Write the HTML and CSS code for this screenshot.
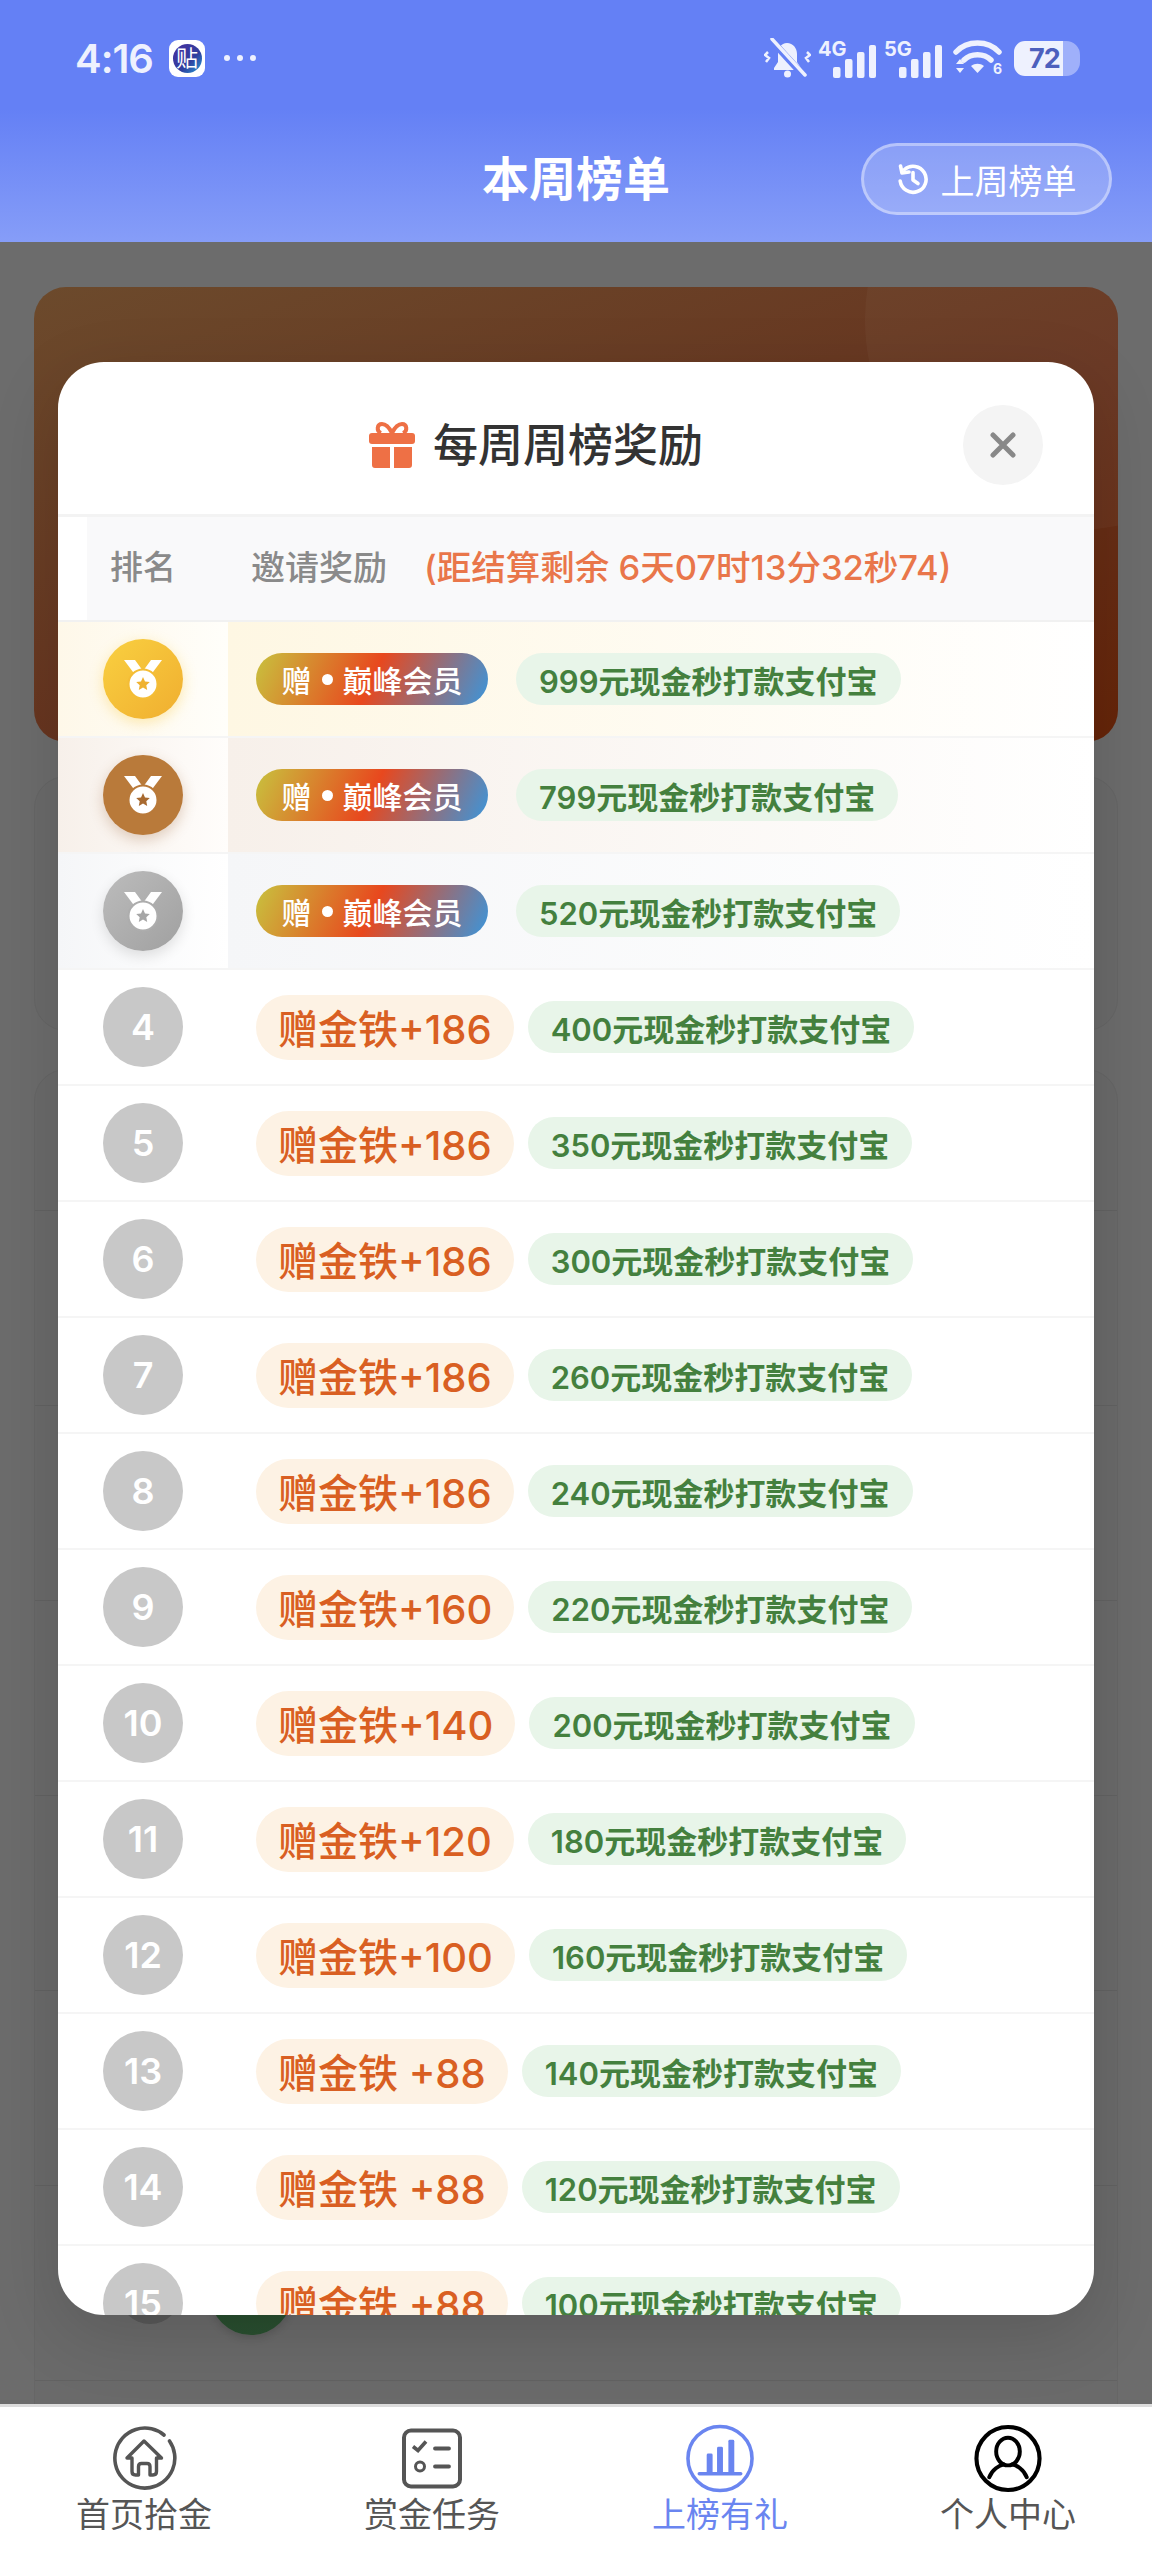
FILE: index.html
```html
<!DOCTYPE html>
<html lang="zh-CN">
<head>
<meta charset="utf-8">
<title>本周榜单</title>
<link rel="stylesheet" href="styles.css">
</head>
<body>
<div class="page">
  <header class="top">
    <div class="status">
      <div class="status-left">
        <span class="time">4:16</span>
        <span class="app-icon"><span class="app-inner">贴</span></span>
        <span class="dots"><i></i><i></i><i></i></span>
      </div>
      <div class="status-right">
        <svg class="ic-bell" width="47" height="40" viewBox="0 0 47 40"><path d="M23 5c-6 0-9 5-9 11v8l-4 6v2h27v-2l-4-6v-8c0-6-4-11-10-11z" fill="#eef1fe"/><circle cx="23.500" cy="36" r="3.500" fill="#eef1fe"/><path d="M7 2l33 36" stroke="#6480f5" stroke-width="7"/><path d="M8 1l33 36" stroke="#eef1fe" stroke-width="3.500" stroke-linecap="round"/><path d="M4 14l-3 3 4 3-3 4M43 14l3 3-4 3 3 4" stroke="#eef1fe" stroke-width="2.500" fill="none"/></svg>
        <svg class="ic-net" width="58" height="44" viewBox="0 0 58 44"><text class="net-label" x="0" y="20">4G</text><rect x="15" y="31" width="7.500" height="11" rx="2"/><rect x="27" y="23" width="7.500" height="19" rx="2"/><rect x="39" y="16" width="7.500" height="26" rx="2"/><rect x="51" y="9" width="7" height="33" rx="2"/></svg>
        <svg class="ic-net" width="58" height="44" viewBox="0 0 58 44"><text class="net-label" x="0" y="20">5G</text><rect x="15" y="31" width="7.500" height="11" rx="2"/><rect x="27" y="23" width="7.500" height="19" rx="2"/><rect x="39" y="16" width="7.500" height="26" rx="2"/><rect x="51" y="9" width="7" height="33" rx="2"/></svg>
        <svg class="ic-wifi" width="50" height="42" viewBox="0 0 50 42"><path d="M3 13C14 1 35 1 46 13M11 21c7-7 20-7 27 0" fill="none" stroke="#eef1fe" stroke-width="5.500" stroke-linecap="round"/><path d="M18 27c4-3 9-3 13 0l-6.500 7z" fill="#eef1fe"/><path d="M3 25l4-5 4 5zM3 29h8l-4 5z" fill="#eef1fe"/><text class="wifi-six" x="40" y="35">6</text></svg>
        <span class="battery"><span class="battery-num">72</span></span>
      </div>
    </div>
    <div class="nav">
      <span></span>
      <h1 class="nav-title">本周榜单</h1>
      <button class="history-btn">
        <svg width="32" height="32" viewBox="0 0 32 32"><path d="M7.500 6.500A13 13 0 1 1 3.200 18" fill="none" stroke="#fff" stroke-width="3.600" stroke-linecap="round"/><path d="M3.500 3l1.500 7 7-1" fill="none" stroke="#fff" stroke-width="3.600" stroke-linecap="round" stroke-linejoin="round"/><path d="M16 9.500V17l5 3.500" fill="none" stroke="#fff" stroke-width="3.600" stroke-linecap="round" stroke-linejoin="round"/></svg>
        <span>上周榜单</span>
      </button>
    </div>
  </header>

  <main class="backdrop">
    <section class="bg-hero"><span class="bg-hero-glow"></span></section>
    <section class="bg-card bg-card-short"></section>
    <section class="bg-card bg-list">
      <div class="bg-row bg-row-first"></div>
      <div class="bg-row"></div>
      <div class="bg-row"></div>
      <div class="bg-row"></div>
      <div class="bg-row"></div>
      <div class="bg-row"></div>
      <div class="bg-row bg-row-people"><span class="bg-rank"></span><span class="bg-avatar"></span></div>
      <div class="bg-row"></div>
    </section>
  </main>

  <nav class="tabs">
    <a class="tab">
      <svg width="66" height="66" viewBox="0 0 66 66"><path d="M58.500 15.500A30 30 0 1 1 53 9.500" fill="none" stroke="#555" stroke-width="3.600" stroke-linecap="round"/><path d="M16 32.500L33 15.500l17.500 17h-5V46q0 3.500-3.500 3.500h-3V41q0-3-3-3h-5.500q-3 0-3 3v8.500h-3q-3.500 0-3.500-3.500V32.500z" fill="none" stroke="#555" stroke-width="3.400" stroke-linejoin="round"/></svg>
      <span>首页拾金</span>
    </a>
    <a class="tab">
      <svg width="66" height="66" viewBox="0 0 66 66"><rect x="5" y="5" width="56" height="56" rx="7" fill="none" stroke="#555" stroke-width="4"/><path d="M14 21l5 4 8-9" fill="none" stroke="#555" stroke-width="3.600"/><path d="M36 23h14M36 41h14" stroke="#555" stroke-width="3.800" stroke-linecap="round"/><circle cx="21" cy="41" r="4.500" fill="none" stroke="#555" stroke-width="3"/></svg>
      <span>赏金任务</span>
    </a>
    <a class="tab tab-on">
      <svg width="70" height="70" viewBox="0 0 70 70"><circle cx="35" cy="35" r="32.500" fill="none" stroke="#6a85f0" stroke-width="3.600"/><path d="M14 50.500h42" stroke="#6a85f0" stroke-width="3.600" stroke-linecap="round"/><rect x="21.500" y="30" width="6" height="20" rx="1.500" fill="#6a85f0"/><rect x="32" y="23" width="6" height="27" rx="1.500" fill="#6a85f0"/><rect x="43.500" y="16" width="6" height="34" rx="1.500" fill="#6a85f0"/></svg>
      <span>上榜有礼</span>
    </a>
    <a class="tab">
      <svg width="70" height="70" viewBox="0 0 70 70"><circle cx="35" cy="35" r="32" fill="none" stroke="#000" stroke-width="4.200"/><ellipse cx="35" cy="28" rx="12" ry="14" fill="none" stroke="#000" stroke-width="4"/><path d="M16 54c3-8 10-12 15-13M54 54c-3-8-10-12-15-13" fill="none" stroke="#000" stroke-width="4" stroke-linecap="round"/></svg>
      <span>个人中心</span>
    </a>
  </nav>

  <div class="modal">
    <div class="modal-head">
      <svg width="46" height="46" viewBox="0 0 46 46"><path d="M12 11C7 9 8 2 13 2c4 0 8 5 10 9 2-4 6-9 10-9 5 0 6 7 1 9" fill="none" stroke="#ee7045" stroke-width="4"/><rect x="0" y="11" width="46" height="11" rx="3" fill="#ee7045"/><path d="M3 25h18v21H6q-3 0-3-3zM25 25h18v18q0 3-3 3H25z" fill="#ee7045"/></svg>
      <h2 class="modal-title">每周周榜奖励</h2>
      <button class="close"><svg width="26" height="26" viewBox="0 0 26 26"><path d="M3 3l20 20M23 3L3 23" stroke="#888" stroke-width="5" stroke-linecap="round"/></svg></button>
    </div>
    <div class="thead">
      <span class="th-rank">排名</span>
      <span class="th-reward">邀请奖励</span>
      <span class="th-count">(距结算剩余 6天07时13分32秒74)</span>
    </div>

    <div class="row row-gold">
      <div class="rank"><span class="medal medal-gold"><svg width="80" height="80" viewBox="0 0 80 80"><path d="M21 21h11l8 11-7 5zM59 21H48l-8 11 7 5z" fill="#fff"/><circle cx="40" cy="45" r="14.500" fill="#fff" stroke="#f4bd36" stroke-width="2"/><path d="M40 38l2 4.400 4.800.6-3.500 3.300.9 4.700-4.200-2.400-4.200 2.400.9-4.700-3.500-3.300 4.800-.6z" fill="#efb230"/></svg></span></div>
      <div class="reward"><span class="vip"><span>赠</span><i class="vip-dot"></i><span>巅峰会员</span></span><span class="cash">999元现金秒打款支付宝</span></div>
    </div>
    <div class="row row-bronze">
      <div class="rank"><span class="medal medal-bronze"><svg width="80" height="80" viewBox="0 0 80 80"><path d="M21 21h11l8 11-7 5zM59 21H48l-8 11 7 5z" fill="#fff"/><circle cx="40" cy="45" r="14.500" fill="#fff" stroke="#b97a3a" stroke-width="2"/><path d="M40 38l2 4.400 4.800.6-3.500 3.300.9 4.700-4.200-2.400-4.200 2.400.9-4.700-3.500-3.300 4.800-.6z" fill="#a86a30"/></svg></span></div>
      <div class="reward"><span class="vip"><span>赠</span><i class="vip-dot"></i><span>巅峰会员</span></span><span class="cash">799元现金秒打款支付宝</span></div>
    </div>
    <div class="row row-silver">
      <div class="rank"><span class="medal medal-silver"><svg width="80" height="80" viewBox="0 0 80 80"><path d="M21 21h11l8 11-7 5zM59 21H48l-8 11 7 5z" fill="#fff"/><circle cx="40" cy="45" r="14.500" fill="#fff" stroke="#adadad" stroke-width="2"/><path d="M40 38l2 4.400 4.800.6-3.500 3.300.9 4.700-4.200-2.400-4.200 2.400.9-4.700-3.500-3.300 4.800-.6z" fill="#a6a6a6"/></svg></span></div>
      <div class="reward"><span class="vip"><span>赠</span><i class="vip-dot"></i><span>巅峰会员</span></span><span class="cash">520元现金秒打款支付宝</span></div>
    </div>
    <div class="row"><div class="rank"><span class="num">4</span></div><div class="reward"><span class="gift">赠金铁+186</span><span class="cash">400元现金秒打款支付宝</span></div></div>
    <div class="row"><div class="rank"><span class="num">5</span></div><div class="reward"><span class="gift">赠金铁+186</span><span class="cash">350元现金秒打款支付宝</span></div></div>
    <div class="row"><div class="rank"><span class="num">6</span></div><div class="reward"><span class="gift">赠金铁+186</span><span class="cash">300元现金秒打款支付宝</span></div></div>
    <div class="row"><div class="rank"><span class="num">7</span></div><div class="reward"><span class="gift">赠金铁+186</span><span class="cash">260元现金秒打款支付宝</span></div></div>
    <div class="row"><div class="rank"><span class="num">8</span></div><div class="reward"><span class="gift">赠金铁+186</span><span class="cash">240元现金秒打款支付宝</span></div></div>
    <div class="row"><div class="rank"><span class="num">9</span></div><div class="reward"><span class="gift">赠金铁+160</span><span class="cash">220元现金秒打款支付宝</span></div></div>
    <div class="row"><div class="rank"><span class="num">10</span></div><div class="reward"><span class="gift">赠金铁+140</span><span class="cash">200元现金秒打款支付宝</span></div></div>
    <div class="row"><div class="rank"><span class="num">11</span></div><div class="reward"><span class="gift">赠金铁+120</span><span class="cash">180元现金秒打款支付宝</span></div></div>
    <div class="row"><div class="rank"><span class="num">12</span></div><div class="reward"><span class="gift">赠金铁+100</span><span class="cash">160元现金秒打款支付宝</span></div></div>
    <div class="row"><div class="rank"><span class="num">13</span></div><div class="reward"><span class="gift">赠金铁 +88</span><span class="cash">140元现金秒打款支付宝</span></div></div>
    <div class="row"><div class="rank"><span class="num">14</span></div><div class="reward"><span class="gift">赠金铁 +88</span><span class="cash">120元现金秒打款支付宝</span></div></div>
    <div class="row"><div class="rank"><span class="num">15</span></div><div class="reward"><span class="gift">赠金铁 +88</span><span class="cash">100元现金秒打款支付宝</span></div></div>
  </div>
</div>
</body>
</html>
```
FILE: styles.css
```css
* { box-sizing: border-box; }
html, body { margin: 0; padding: 0; }
body {
  font-family: Inter, "Noto Sans CJK SC", sans-serif;
  background: #fff;
}
h1, h2 { margin: 0; font-weight: 500; }
button { border: 0; padding: 0; font: inherit; }

.page {
  position: relative;
  width: 1152px;
  height: 2560px;
  display: flex;
  flex-direction: column;
  overflow: hidden;
}

/* header */
.top {
  position: relative;
  z-index: 2;
  height: 242px;
  flex: none;
  background: linear-gradient(180deg, #6480f5 0, #6480f5 45%, #869df8 100%);
  color: #fff;
}
.status {
  height: 116px;
  padding: 0 72px 0 75px;
  display: flex;
  align-items: center;
  justify-content: space-between;
}
.status-left { display: flex; align-items: center; }
.time { font-size: 40px; font-weight: 600; color: #eef1fe; width: 94px; letter-spacing: -1px; }
.app-icon {
  width: 36px; height: 37px;
  background: #fff;
  border-radius: 9px;
  display: flex; align-items: center; justify-content: center;
}
.app-inner {
  width: 29px; height: 29px;
  border-radius: 50%;
  background: linear-gradient(135deg, #4a2fa0, #2e3f9e 60%, #26a0d8);
  color: #fff;
  font-size: 22px;
  line-height: 29px;
  text-align: center;
}
.dots { display: flex; gap: 7px; margin-left: 19px; }
.dots i { width: 6px; height: 6px; border-radius: 50%; background: #eef1fe; }
.status-right { display: flex; align-items: center; gap: 7px; }
.ic-net rect { fill: #eef1fe; }
.net-label { font-size: 20px; font-weight: 700; fill: #eef1fe; }
.wifi-six { font-size: 14px; font-weight: 700; fill: #eef1fe; }
.ic-wifi { margin-left: 4px; margin-top: 4px; }
.ic-net + .ic-net { margin-left: 1px; }
.battery {
  width: 66px; height: 35px;
  margin-left: 4px;
  border-radius: 11px 14px 14px 11px;
  background: linear-gradient(90deg, #eef1fe 0, #eef1fe 74%, #9fb0fa 74%);
  display: flex; align-items: center;
  padding-left: 15px;
}
.battery-num { font-size: 27px; font-weight: 700; color: #4d60bd; line-height: 1; letter-spacing: -1px; }

.nav {
  height: 126px;
  display: grid;
  grid-template-columns: 1fr auto 1fr;
  align-items: center;
  padding: 0 40px;
}
.nav-title { font-size: 47px; line-height: 1; color: #fff; font-weight: 700; margin-top: -2px; }
.history-btn {
  justify-self: end;
  width: 251px; height: 72px;
  border-radius: 36px;
  background: rgba(255,255,255,.2);
  border: 3px solid rgba(255,255,255,.38);
  color: #fff;
  display: flex; align-items: center; justify-content: center; gap: 12px;
  font-size: 34px;
  font-family: inherit;
}

/* dimmed page behind the modal */
.backdrop {
  flex: 1;
  min-height: 0;
  overflow: hidden;
  background: #6c6c6c;
  padding: 45px 34px 0;
  display: flex;
  flex-direction: column;
}
.bg-hero {
  position: relative;
  flex: none;
  height: 455px;
  border-radius: 32px;
  overflow: hidden;
  background: linear-gradient(160deg, #6c4a2c 0, #67341f 55%, #652408 100%);
}
.bg-hero-glow {
  position: absolute;
  left: 831px; top: -177px;
  width: 420px; height: 420px;
  border-radius: 50%;
  background: rgba(255,255,255,.03);
}
.bg-card {
  flex: none;
  border-radius: 32px;
  background: #6a6a6a;
  border: 1px solid #666;
}
.bg-card-short { height: 255px; margin-top: 34px; }
.bg-list { margin-top: 38px; }
.bg-row { height: 195px; border-bottom: 1px solid #626262; display: flex; align-items: center; }
.bg-row-first { height: 141px; }
.bg-row-people { padding: 20px 0 0 84px; gap: 29px; }
.bg-rank { width: 62px; height: 62px; border-radius: 50%; background: #585858; }
.bg-avatar {
  width: 82px; height: 82px;
  border-radius: 50%;
  background: linear-gradient(180deg, #3a2a22 0, #274d2e 70%, #2a4f30 100%);
  margin-top: 2px;
  box-shadow: 0 3px 8px rgba(0,0,0,.15);
}

/* tab bar */
.tabs {
  position: relative;
  z-index: 2;
  flex: none;
  height: 156px;
  background: #fff;
  border-top: 3px solid #dcdcdc;
  display: grid;
  grid-template-columns: repeat(4, 288px);
}
.tab {
  display: flex;
  flex-direction: column;
  align-items: center;
  font-size: 34px;
  line-height: 40px;
  color: #555;
  padding-top: 17px;
}
.tab svg { height: 69px; flex: none; }
.tab span { margin-top: 2px; }
.tab-on { color: #6a85f0; }

/* modal */
.modal {
  position: absolute;
  z-index: 1;
  left: 58px; top: 362px;
  width: 1036px; height: 1953px;
  border-radius: 46px;
  background: #fff;
  overflow: hidden;
  box-shadow: 0 20px 70px rgba(0,0,0,.14);
}
.modal-head {
  height: 152px;
  padding: 14px 51px 0 311px;
  display: flex;
  align-items: center;
}
.modal-title { font-size: 45px; color: #333; margin-left: 18px; line-height: 1; }
.close {
  margin-left: auto;
  width: 80px; height: 80px;
  border-radius: 50%;
  background: #f4f4f4;
  display: flex; align-items: center; justify-content: center;
}
.thead {
  height: 108px;
  border-top: 3px solid #f3f3f3;
  border-bottom: 2px solid #f1f1f1;
  background: linear-gradient(90deg, #fff 0, #fff 29px, #f9f9fa 29px);
  display: flex;
  align-items: center;
  font-size: 33px;
  font-weight: 500;
  color: #8a8a8a;
  padding: 0 0 7px 52px;
}
.th-reward { margin-left: 75px; font-size: 34px; }
.th-count { margin-left: 37px; color: #e9764a; font-size: 34.500px; }

.row {
  height: 116px;
  border-bottom: 2px solid #f5f5f5;
  display: grid;
  grid-template-columns: 170px 1fr;
}
.rank { display: flex; align-items: center; justify-content: center; }
.reward { display: flex; align-items: center; gap: 14px; padding-left: 28px; }
.row-gold .rank { background: linear-gradient(90deg, #fef8e9, #fffefa); }
.row-gold .reward { background: linear-gradient(90deg, #fef7e3, #ffffff); }
.row-bronze .rank { background: linear-gradient(90deg, #f7f0ea, #fffdfb); }
.row-bronze .reward { background: linear-gradient(90deg, #f7f0ea, #ffffff); }
.row-silver .rank { background: linear-gradient(90deg, #f5f6f8, #ffffff); }
.row-silver .reward { background: linear-gradient(90deg, #f5f6f8, #ffffff); }

.medal, .num {
  width: 80px; height: 80px;
  border-radius: 50%;
  display: flex; align-items: center; justify-content: center;
}
.medal-gold { background: linear-gradient(135deg, #f9d040, #f0ae30); box-shadow: 0 4px 14px rgba(250,205,70,.4); }
.medal-bronze { background: #b97a3a; box-shadow: 0 5px 14px rgba(150,90,40,.28); }
.medal-silver { background: linear-gradient(135deg, #bcbcbc, #a0a0a0); box-shadow: 0 5px 14px rgba(0,0,0,.12); }
.num { background: #c8c8c8; color: #fff; font-size: 36px; font-weight: 600; }

.vip {
  width: 232px; height: 52px;
  margin-right: 14px;
  border-radius: 26px;
  background: linear-gradient(115deg, #c8c23e 0, #e8481e 50%, #3a96dc 100%);
  color: #fff;
  font-size: 30px;
  font-weight: 500;
  display: flex; align-items: center; justify-content: center; gap: 10px;
  white-space: nowrap;
}
.vip-dot { width: 11px; height: 11px; border-radius: 50%; background: #fff; }
.gift {
  height: 65px;
  padding: 0 22px;
  border-radius: 33px;
  background: #fdf2e4;
  color: #d95f22;
  font-size: 40px;
  font-weight: 500;
  display: flex; align-items: center;
  white-space: nowrap;
}
.cash {
  height: 52px;
  padding: 0 23px;
  border-radius: 26px;
  background: #e8f5e9;
  color: #44803e;
  font-size: 31px;
  font-weight: 600;
  display: flex; align-items: center;
  white-space: nowrap;
}
```
